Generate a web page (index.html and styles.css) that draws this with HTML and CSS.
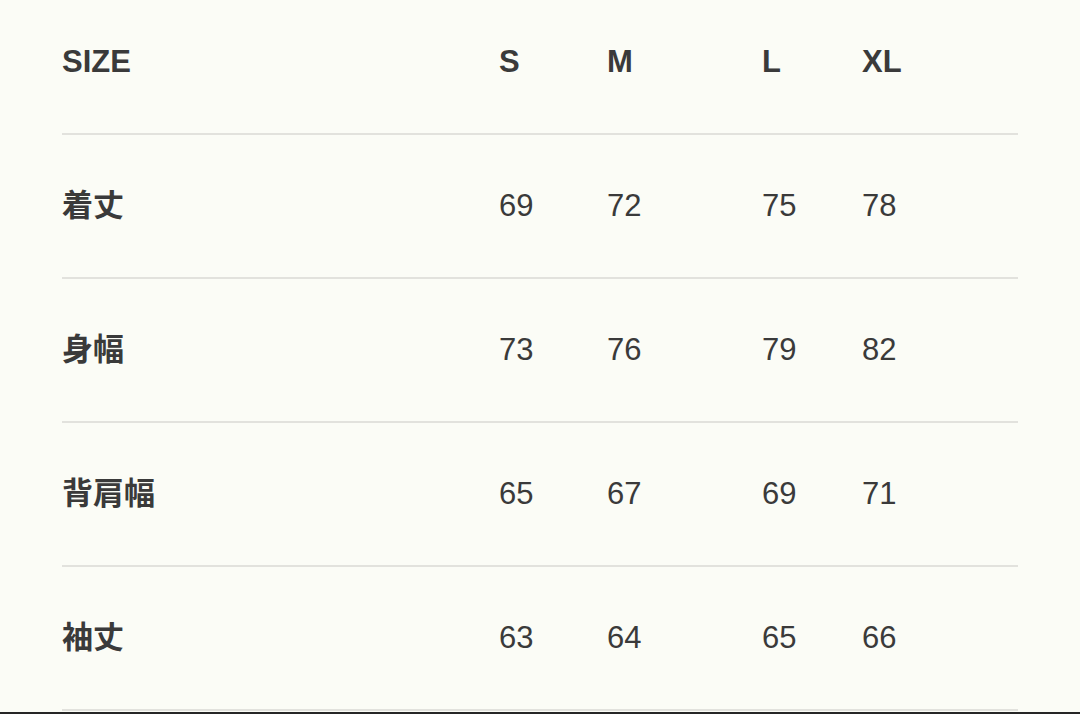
FILE: index.html
```html
<!DOCTYPE html>
<html lang="ja">
<head>
<meta charset="utf-8">
<title>Size chart</title>
<link rel="stylesheet" href="styles.css">
</head>
<body>
<div class="page">
  <div class="chart">
    <div class="row head">
      <div class="cell label">SIZE</div>
      <div class="cell">S</div>
      <div class="cell">M</div>
      <div class="cell">L</div>
      <div class="cell">XL</div>
    </div>
    <div class="row">
      <div class="cell label">着丈</div>
      <div class="cell">69</div>
      <div class="cell">72</div>
      <div class="cell">75</div>
      <div class="cell">78</div>
    </div>
    <div class="row">
      <div class="cell label">身幅</div>
      <div class="cell">73</div>
      <div class="cell">76</div>
      <div class="cell">79</div>
      <div class="cell">82</div>
    </div>
    <div class="row">
      <div class="cell label">背肩幅</div>
      <div class="cell">65</div>
      <div class="cell">67</div>
      <div class="cell">69</div>
      <div class="cell">71</div>
    </div>
    <div class="row">
      <div class="cell label">袖丈</div>
      <div class="cell">63</div>
      <div class="cell">64</div>
      <div class="cell">65</div>
      <div class="cell">66</div>
    </div>
  </div>
  <div class="bottom-bar"></div>
</div>
</body>
</html>
```
FILE: styles.css
```css
html, body {
  margin: 0;
  padding: 0;
  overflow: hidden;
  background: #fbfcf6;
}
.page {
  height: 714px;
  display: flex;
  flex-direction: column;
}
.chart {
  margin-left: 62px;
  width: 956px;
  font-family: "Liberation Sans", Arial, "Noto Sans CJK JP", sans-serif;
  color: #3a3a3a;
  font-size: 31px;
  line-height: 36px;
}
.row {
  display: grid;
  grid-template-columns: 437px 108px 155px 100px 156px;
  padding: 53px 0 53px;
  border-bottom: 2px solid #e2e2dd;
}
.row.head {
  padding-top: 44px;
  padding-bottom: 53px;
  font-weight: bold;
}
.cell {
  white-space: nowrap;
}
.label {
  font-weight: bold;
}
.bottom-bar {
  margin-top: 1px;
  height: 4px;
  background: #262626;
}
```
